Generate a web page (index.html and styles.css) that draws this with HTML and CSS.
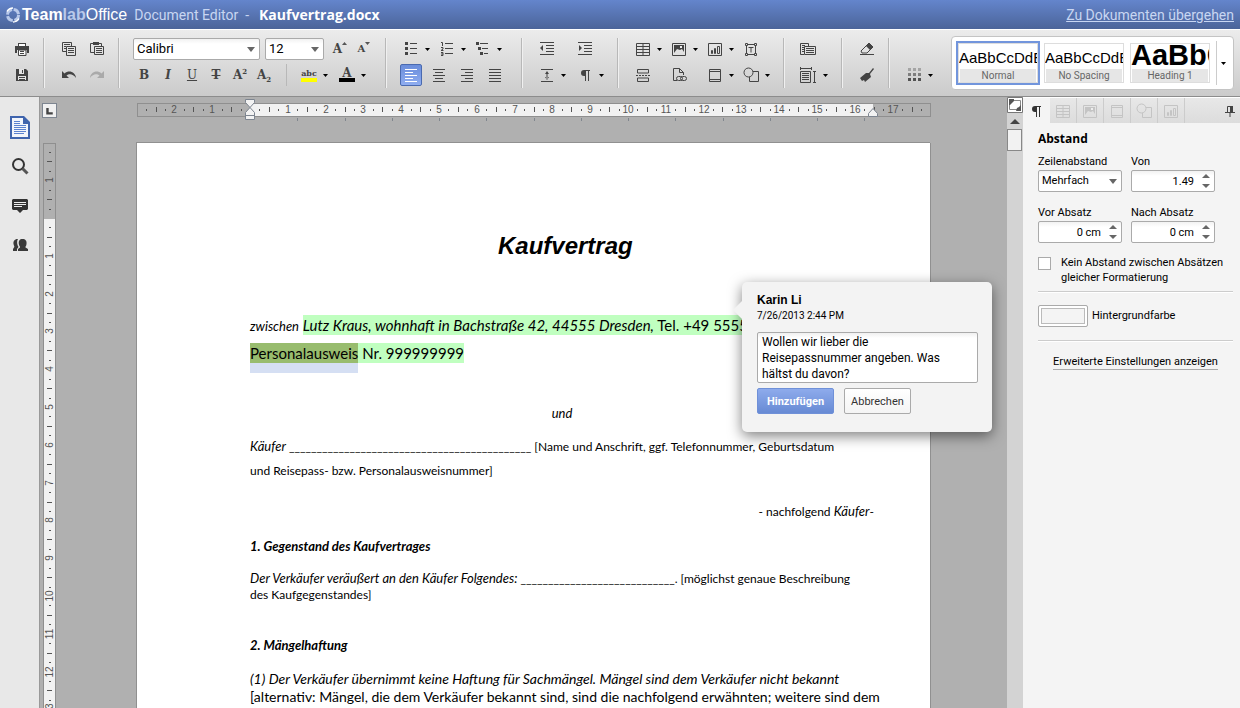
FILE: index.html
```html
<!DOCTYPE html>
<html lang="de">

<head>
  <meta charset="UTF-8">
  <meta name="viewport" content="width=device-width, initial-scale=1.0">
  <title>Kaufvertrag.docx</title>
  <link rel="stylesheet" href="styles.css">
</head>

<body>

  <!-- icon sprite -->
  <svg class="sprite">
    <symbol id="print" viewBox="0 0 16 16"><path fill="currentColor" d="M4 2h8v3H4zM1 5h14v7h-2V9H3v3H1z"/><path fill="#fff" d="M5 3h6v2H5zM4.500 9.500h7v4h-7z"/><path fill="none" stroke="currentColor" d="M4 9h8v5.500H4.500V9M6 10.500h4M6 12.500h4"/></symbol>
    <symbol id="save" viewBox="0 0 16 16"><path fill="currentColor" d="M2 2h10l2 2v10H2z"/><path fill="#e4e4e4" d="M5 2h5v5H5zM4 9h8v4H4z"/><path fill="currentColor" d="M8 3h1v3H8zM5 10h6v1H5zM5 12h6v1H5z"/></symbol>
    <symbol id="copy" viewBox="0 0 16 16"><path fill="none" stroke="currentColor" d="M5 10.500H1.500v-9h9V5M3 3.500h6M3 5.500h2M3 7.500h2M5.500 5.500h9v9h-9zM7 7.500h6M7 9.500h6M7 11.500h6"/></symbol>
    <symbol id="paste" viewBox="0 0 16 16"><path fill="none" stroke="currentColor" d="M5 11.500H1.500v-9h11V5M5.500 5.500h9v8h-9zM7 7.500h6M7 9.500h6M7 11.500h6"/><path fill="currentColor" d="M4 1h6v3H4z"/></symbol>
    <symbol id="undo" viewBox="0 0 16 16"><path fill="currentColor" d="M1 4v7h7L5.500 8.500C8 6.500 12 6.500 15 11c-.5-6-7-8.500-11.500-4.500z"/></symbol>
    <symbol id="redo" viewBox="0 0 16 16"><path fill="currentColor" d="M15 4v7H8l2.500-2.500C8 6.500 4 6.500 1 11c.5-6 7-8.500 11.500-4.500z"/></symbol>
    <symbol id="bullets" viewBox="0 0 16 16"><path fill="currentColor" d="M2 1h3v3H2zM2 6h3v3H2zM2 11h3v3H2zM7 2h7v1H7zM7 7h7v1H7zM7 12h7v1H7z"/></symbol>
    <symbol id="numbers" viewBox="0 0 16 16"><path fill="currentColor" d="M6 2h8v1H6zM6 7h8v1H6zM6 12h8v1H6z"/><path fill="none" stroke="currentColor" d="M2 1.500h1.500V5M2 6.500h2v1.500L2 9.500h2.500M2 11.500h2v3H2M2 13h2"/></symbol>
    <symbol id="levels" viewBox="0 0 16 16"><path fill="currentColor" d="M1 1h3v3H1zM3 6h3v3H3zM5 11h3v3H5zM5 2h8v1H5zM7 7h6v1H7zM9 12h4v1H9z"/></symbol>
    <symbol id="left" viewBox="0 0 16 16"><path fill="currentColor" d="M2 2h12v1H2zM2 5h8v1H2zM2 8h12v1H2zM2 11h8v1H2zM2 14h12v1H2z"/></symbol>
    <symbol id="center" viewBox="0 0 16 16"><path fill="currentColor" d="M2 2h12v1H2zM4 5h8v1H4zM2 8h12v1H2zM4 11h8v1H4zM2 14h12v1H2z"/></symbol>
    <symbol id="right" viewBox="0 0 16 16"><path fill="currentColor" d="M2 2h12v1H2zM6 5h8v1H6zM2 8h12v1H2zM6 11h8v1H6zM2 14h12v1H2z"/></symbol>
    <symbol id="justify" viewBox="0 0 16 16"><path fill="currentColor" d="M2 2h12v1H2zM2 5h12v1H2zM2 8h12v1H2zM2 11h12v1H2zM2 14h12v1H2z"/></symbol>
    <symbol id="outdent" viewBox="0 0 16 16"><path fill="currentColor" d="M1 1h14v1H1zM7 4h8v1H7zM7 7h8v1H7zM7 10h8v1H7zM1 13h14v1H1zM4 4v6L1 7z"/></symbol>
    <symbol id="indent" viewBox="0 0 16 16"><path fill="currentColor" d="M1 1h14v1H1zM7 4h8v1H7zM7 7h8v1H7zM7 10h8v1H7zM1 13h14v1H1zM2 4v6l3-3z"/></symbol>
    <symbol id="spacing" viewBox="0 0 16 16"><path fill="currentColor" d="M2 2h12v1H2zM2 14h12v1H2zM7.500 5h1v7h-1zM8 4l2 3H6zM8 13l2-3H6z"/></symbol>
    <symbol id="para" viewBox="0 0 16 16"><path fill="currentColor" d="M7 3h6v1h-1v10h-1V4H9v10H8V9H7a3 3 0 0 1 0-6z"/></symbol>
    <symbol id="table" viewBox="0 0 16 16"><path fill="none" stroke="currentColor" d="M1.500 2.500h13v12h-13zM1.500 5.500h13M1.500 8.500h13M1.500 11.500h13M8 2.500v12"/></symbol>
    <symbol id="image" viewBox="0 0 16 16"><path fill="none" stroke="currentColor" d="M1.500 2.500h13v12h-13z"/><path fill="currentColor" d="M3 4h10v7l-2-3-2 1-3-1-3 4z"/><path fill="#eee" d="M9 5h2v2H9z"/></symbol>
    <symbol id="chart" viewBox="0 0 16 16"><path fill="none" stroke="currentColor" d="M1.500 2.500h13v12h-13zM4.500 9.500h1v3h-1zM7.500 7.500h1v5h-1zM10.500 5.500h2v7h-2z"/></symbol>
    <symbol id="textbox" viewBox="0 0 16 16"><path fill="none" stroke="currentColor" d="M4 3.500h8M4 13.500h8M3.500 5v7M12.500 5v7M2.500 2.500h2v2h-2zM11.500 2.500h2v2h-2zM2.500 12.500h2v2h-2zM11.500 12.500h2v2h-2zM5.500 6.500h5M8 6.500v5"/></symbol>
    <symbol id="pagebreak" viewBox="0 0 16 16"><path fill="none" stroke="currentColor" d="M2.500 6V2.500h11V6zM2.500 14.500V11h11v3.500z"/><path fill="none" stroke="currentColor" stroke-dasharray="2 1" d="M1 8.500h14"/></symbol>
    <symbol id="link" viewBox="0 0 16 16"><path fill="none" stroke="currentColor" d="M6 13.500H2.500v-12h6l4 4V8M8.500 1.500v4h4"/><rect x="5.500" y="9.500" width="6" height="4" rx="2" fill="none" stroke="currentColor"/><rect x="9.500" y="9.500" width="6" height="4" rx="2" fill="none" stroke="currentColor"/></symbol>
    <symbol id="headfoot" viewBox="0 0 16 16"><path fill="none" stroke="currentColor" d="M2.500 2.500h11v12h-11zM2.500 4.500h11M2.500 12.500h11"/></symbol>
    <symbol id="shapes" viewBox="0 0 16 16"><path fill="none" stroke="currentColor" d="M10 4.500h5.500v10h-9V10"/><circle cx="5.500" cy="5.500" r="4.500" fill="none" stroke="currentColor"/></symbol>
    <symbol id="wrap" viewBox="0 0 18 16"><path fill="none" stroke="currentColor" d="M5 13.500H1.500v-11h8V5M3 4.500h3M3 6.500h2M3 8.500h2M3 10.500h2M5.500 5.500h11v8h-11zM7 7.500h8M7 9.500h8M7 11.500h8"/></symbol>
    <symbol id="size" viewBox="0 0 18 16"><path fill="none" stroke="currentColor" d="M1 1.500h12M1.500 0v3M12.500 0v3M1.500 4.500h10v11h-10zM3 6.500h7M3 8.500h7M3 10.500h7M3 12.500h7M14 4.500h3M14 15.500h3M15.500 4.500v11"/></symbol>
    <symbol id="eraser" viewBox="0 0 16 16"><path fill="none" stroke="currentColor" d="M1 13.500h14M2 10l8-8 4 4-6 6H3z"/><path fill="currentColor" d="M10 2l4 4-3 3-4-4z"/></symbol>
    <symbol id="brush" viewBox="0 0 16 16"><path fill="currentColor" d="M14 1l1 1-4 5 1 3-6 5-1-2-2 1-2-3 6-5 3 0z"/></symbol>
    <symbol id="tiles" viewBox="0 0 16 16"><path fill="currentColor" opacity=".35" d="M2 1h3v3H2zM7 1h3v3H7zM12 1h3v3h-3z"/><path fill="currentColor" opacity=".6" d="M2 6h3v3H2zM7 6h3v3H7zM12 6h3v3h-3z"/><path fill="currentColor" opacity=".9" d="M2 11h3v3H2zM7 11h3v3H7zM12 11h3v3h-3z"/></symbol>
    <symbol id="caret" viewBox="0 0 5 3"><path fill="#000" d="M0 0h5L2.500 3z"/></symbol>
    <symbol id="pin" viewBox="0 0 16 16"><path fill="none" stroke="currentColor" d="M5.500 9V3.500h5V9M3 9.500h10M8 10v4"/><path fill="currentColor" d="M8 3h3v6H8z"/></symbol>
  </svg>

  <header class="header">
    <svg class="logo" viewBox="0 0 16 16">
      <circle cx="8" cy="8" r="5.500" fill="none" stroke="#b9c9ea" stroke-width="3" stroke-dasharray="7 1.640"/>
      <path fill="none" stroke="#fff" stroke-width="1.500" d="M2 4.500A7 7 0 0 1 8 1M14 11.500A7 7 0 0 1 8 15"/>
    </svg>
    <span class="brand"><b>Team</b><b class="pale">lab</b>Office</span>
    <span class="product">Document Editor &nbsp;-</span>
    <h1 class="filename">Kaufvertrag.docx</h1>
    <a class="back" href="#documents">Zu Dokumenten übergehen</a>
  </header>

  <div class="toolbar">
    <div class="group">
      <div class="row"><button class="btn" aria-label="Drucken"><svg><use href="#print"/></svg></button></div>
      <div class="row"><button class="btn" aria-label="Speichern"><svg><use href="#save"/></svg></button></div>
    </div>

    <div class="group">
      <div class="row spaced">
        <button class="btn" aria-label="Kopieren"><svg><use href="#copy"/></svg></button>
        <button class="btn" aria-label="Einfügen"><svg><use href="#paste"/></svg></button>
      </div>
      <div class="row spaced">
        <button class="btn" aria-label="Rückgängig"><svg><use href="#undo"/></svg></button>
        <button class="btn" aria-label="Wiederholen" disabled><svg><use href="#redo"/></svg></button>
      </div>
    </div>

    <div class="group">
      <div class="row fonts">
        <span class="combo font-name"><select aria-label="Schriftart"><option>Calibri</option></select></span>
        <span class="combo font-size"><select aria-label="Schriftgrad"><option>12</option></select></span>
        <div class="row tight">
          <button class="btn letter" aria-label="Vergrößern">A<svg class="grow" viewBox="0 0 5 3"><path d="M0 3h5L2.500 0z"/></svg></button>
          <button class="btn letter small" aria-label="Verkleinern">A<svg class="grow" viewBox="0 0 5 3"><path d="M0 0h5L2.500 3z"/></svg></button>
        </div>
      </div>
      <div class="row tight">
        <button class="btn letter">B</button>
        <button class="btn letter italic">I</button>
        <button class="btn letter underline">U</button>
        <button class="btn letter strike">T</button>
        <button class="btn letter">A<sup>2</sup></button>
        <button class="btn letter">A<sub>2</sub></button>
        <i class="divider"></i>
        <button class="btn split"><span class="mark">abc</span><svg class="caret"><use href="#caret"/></svg></button>
        <button class="btn split"><span class="mark color">A</span><svg class="caret"><use href="#caret"/></svg></button>
      </div>
    </div>

    <div class="group lists">
      <div class="row">
        <button class="btn split" aria-label="Aufzählung"><svg><use href="#bullets"/></svg><svg class="caret"><use href="#caret"/></svg></button>
        <button class="btn split" aria-label="Nummerierung"><svg><use href="#numbers"/></svg><svg class="caret"><use href="#caret"/></svg></button>
        <button class="btn split" aria-label="Gliederung"><svg><use href="#levels"/></svg><svg class="caret"><use href="#caret"/></svg></button>
      </div>
      <div class="row spaced">
        <button class="btn active" aria-label="Linksbündig"><svg><use href="#left"/></svg></button>
        <button class="btn" aria-label="Zentriert"><svg><use href="#center"/></svg></button>
        <button class="btn" aria-label="Rechtsbündig"><svg><use href="#right"/></svg></button>
        <button class="btn" aria-label="Blocksatz"><svg><use href="#justify"/></svg></button>
      </div>
    </div>

    <div class="group indents">
      <div class="row tight">
        <button class="btn split" aria-label="Einzug verkleinern"><svg><use href="#outdent"/></svg></button>
        <button class="btn split" aria-label="Einzug vergrößern"><svg><use href="#indent"/></svg></button>
      </div>
      <div class="row tight">
        <button class="btn split" aria-label="Zeilenabstand"><svg><use href="#spacing"/></svg><svg class="caret"><use href="#caret"/></svg></button>
        <button class="btn split" aria-label="Steuerzeichen"><svg><use href="#para"/></svg><svg class="caret"><use href="#caret"/></svg></button>
      </div>
    </div>

    <div class="group inserts">
      <div class="row">
        <button class="btn split" aria-label="Tabelle"><svg><use href="#table"/></svg><svg class="caret"><use href="#caret"/></svg></button>
        <button class="btn split" aria-label="Bild"><svg><use href="#image"/></svg><svg class="caret"><use href="#caret"/></svg></button>
        <button class="btn split" aria-label="Diagramm"><svg><use href="#chart"/></svg><svg class="caret"><use href="#caret"/></svg></button>
        <button class="btn split" aria-label="Textfeld"><svg><use href="#textbox"/></svg></button>
      </div>
      <div class="row">
        <button class="btn split" aria-label="Umbruch"><svg><use href="#pagebreak"/></svg></button>
        <button class="btn split" aria-label="Hyperlink"><svg><use href="#link"/></svg></button>
        <button class="btn split" aria-label="Kopf- und Fußzeile"><svg><use href="#headfoot"/></svg><svg class="caret"><use href="#caret"/></svg></button>
        <button class="btn split" aria-label="Formen"><svg><use href="#shapes"/></svg><svg class="caret"><use href="#caret"/></svg></button>
      </div>
    </div>

    <div class="group inserts">
      <div class="row"><button class="btn split page-btn" aria-label="Ausrichtung"><svg class="wide"><use href="#wrap"/></svg></button></div>
      <div class="row"><button class="btn split page-btn" aria-label="Seitengröße"><svg class="wide"><use href="#size"/></svg><svg class="caret"><use href="#caret"/></svg></button></div>
    </div>

    <div class="group">
      <div class="row"><button class="btn" aria-label="Formatierung löschen"><svg><use href="#eraser"/></svg></button></div>
      <div class="row"><button class="btn" aria-label="Format übertragen"><svg><use href="#brush"/></svg></button></div>
    </div>

    <div class="group last">
      <div class="row"><button class="btn split" aria-label="Farbschema"><svg><use href="#tiles"/></svg><svg class="caret"><use href="#caret"/></svg></button></div>
    </div>

    <div class="gallery">
      <button class="style active"><span class="sample">AaBbCcDdEe</span><span class="name">Normal</span></button>
      <button class="style"><span class="sample">AaBbCcDdEe</span><span class="name">No Spacing</span></button>
      <button class="style"><span class="sample big">AaBbCc</span><span class="name">Heading 1</span></button>
      <button class="more" aria-label="Mehr"><svg class="caret"><use href="#caret"/></svg></button>
    </div>
  </div>

  <main class="main">
    <nav class="sidebar">
      <button aria-label="Datei"><svg viewBox="0 0 20 24"><path fill="#3f64ad" d="M0 1h14l6 6v17H0z"/><path fill="#f2f5fb" d="M2 3h11v6h5v13H2z"/><path fill="none" stroke="#5b82d0" d="M4 6.500h6M4 8.500h6M4 10.500h12M4 12.500h12M4 14.500h12M4 16.500h12M4 18.500h10"/></svg></button>
      <button aria-label="Suche"><svg viewBox="0 0 20 24"><circle cx="8.500" cy="10.500" r="5.500" fill="none" stroke="#333" stroke-width="2"/><path stroke="#555" stroke-width="3" d="M12.500 14.500l5 5"/></svg></button>
      <button aria-label="Kommentare"><svg viewBox="0 0 20 24"><path fill="#333" d="M3 6h14l1 1v9l-1 1h-4l-3 3-3-3H3l-1-1V7z"/><path stroke="#eee" d="M4 9.500h12M4 11.500h12M4 13.500h8"/></svg></button>
      <button aria-label="Chat"><svg viewBox="0 0 20 24"><path fill="#3a3a3a" d="M12.500 7c3 0 4.500 2 4 5 0 2-1.500 2.500-1 3.500L18 17v2H8v-2l2-1.500c.5-1-1-1.500-1.200-3.500-.4-3 .7-5 3.700-5zM8 7c-3-.5-5 2-4.500 5 .3 1.500 1 2 .8 3L3 17v2h4v-2l1.500-2C7 13 6.500 9 8 7z"/></svg></button>
    </nav>

    <section class="editor">
      <button class="tabstop" aria-label="Tabulator"><svg viewBox="0 0 16 16"><path stroke="#444" stroke-width="3" fill="none" d="M5.500 5v6.500H12"/></svg></button>
      <svg class="ruler-h" id="ruler-h"></svg>
      <svg class="ruler-v" id="ruler-v"></svg>

      <div class="canvas">
        <article class="page">
          <h2 class="title">&nbsp;Kaufvertrag</h2>
          <p class="party"><small>zwischen</small> <mark><em>Lutz Kraus, wohnhaft in Bachstraße 42, 44555 Dresden,</em> Tel. +49 55555555</mark><br><mark><span class="selected">Personalausweis</span> Nr. 999999999</mark></p>
          <p class="aside seller">- nachfolgend <em>Verkäufer</em>-</p>
          <p class="and"><em>und</em></p>
          <p class="buyer"><em>Käufer</em> ____________________________________________ [Name und Anschrift, ggf. Telefonnummer, Geburtsdatum<br>und Reisepass- bzw. Personalausweisnummer]</p>
          <p class="aside">- nachfolgend <em>Käufer</em>-</p>
          <h3>1. Gegenstand des Kaufvertrages</h3>
          <p class="subject"><em>Der Verkäufer veräußert an den Käufer Folgendes:</em> ____________________________. [möglichst genaue Beschreibung<br>des Kaufgegenstandes]</p>
          <h3 class="second">2. Mängelhaftung</h3>
          <p class="clause"><em>(1) Der Verkäufer übernimmt keine Haftung für Sachmängel. Mängel sind dem Verkäufer nicht bekannt</em><br>[alternativ: Mängel, die dem Verkäufer bekannt sind, sind die nachfolgend erwähnten; weitere sind dem</p>

          <form class="comment">
            <h4>Karin Li</h4>
            <time>7/26/2013 2:44 PM</time>
            <textarea id="comment-text" aria-label="Kommentar" spellcheck="false">Wollen wir lieber die
Reisepassnummer angeben. Was
hältst du davon?</textarea>
            <div class="actions">
              <button type="button" class="primary">Hinzufügen</button>
              <button type="button">Abbrechen</button>
            </div>
          </form>
        </article>
      </div>
    </section>

    <div class="scrollbar">
      <button aria-label="Ansicht"><svg viewBox="0 0 16 16"><path fill="#fff" stroke="#777" d="M.5.5h15v15H.5z"/><path fill="none" stroke="#888" d="M2.500 3.500h11v9h-11z"/><path fill="#555" d="M2 2h5v2L5 6 3 8H2zM14 14H9l1-3 2-1 2-2z"/></svg></button>
      <button aria-label="Nach oben"><svg viewBox="0 0 16 16"><path fill="#444" d="M3 11h10L8 6z"/></svg></button>
      <div class="thumb"></div>
    </div>

    <aside class="panel">
      <div class="tabs">
        <button class="active" aria-label="Absatz"><svg><use href="#para"/></svg></button>
        <button aria-label="Tabelle"><svg><use href="#table"/></svg></button>
        <button aria-label="Bild"><svg><use href="#image"/></svg></button>
        <button aria-label="Kopfzeile"><svg><use href="#headfoot"/></svg></button>
        <button aria-label="Form"><svg><use href="#shapes"/></svg></button>
        <button aria-label="Diagramm"><svg><use href="#chart"/></svg></button>
        <div class="pin"><svg><use href="#pin"/></svg></div>
      </div>

      <div class="settings">
        <h2>Abstand</h2>
        <div class="fields">
          <div class="field">
            <label for="spacing-type">Zeilenabstand</label>
            <span class="combo"><select id="spacing-type"><option>Mehrfach</option></select></span>
          </div>
          <div class="field">
            <label for="spacing-value">Von</label>
            <span class="spin"><input id="spacing-value" type="text" value="1.49"></span>
          </div>
          <div class="field">
            <label for="before">Vor Absatz</label>
            <span class="spin"><input id="before" type="text" value="0 cm"></span>
          </div>
          <div class="field">
            <label for="after">Nach Absatz</label>
            <span class="spin"><input id="after" type="text" value="0 cm"></span>
          </div>
        </div>

        <label class="check"><input type="checkbox"><span>Kein Abstand zwischen Absätzen gleicher Formatierung</span></label>
        <hr>
        <div class="background">
          <button id="bg-color" class="swatch" aria-label="Hintergrundfarbe"></button>
          <label for="bg-color">Hintergrundfarbe</label>
        </div>
        <hr>
        <a class="advanced" href="#advanced">Erweiterte Einstellungen anzeigen</a>
      </div>
    </aside>
  </main>

  <script>

    const CM = 37.8
    const $ = s => document.querySelector(s)

    // marks between two centimetres, numbers on the full ones
    const marks = (from, to, vertical) => {
      let out = ''
      for (let q = Math.ceil(from * 4); q <= to * 4; q++) {
        const pos = Math.round(q / 4 * CM)
        if (q === 0) continue
        if (q % 4 === 0) {
          const n = Math.abs(q / 4)
          out += vertical
            ? `<text transform="translate(10 ${pos}) rotate(-90)">${n}</text>`
            : `<text x="${pos}" y="10">${n}</text>`
        } else {
          const size = q % 2 === 0 ? 5 : 2
          out += vertical
            ? `<rect x="${Math.round(6.5 - size / 2)}" y="${pos}" width="${size}" height="1"/>`
            : `<rect x="${pos}" y="${Math.round(6.5 - size / 2)}" width="1" height="${size}"/>`
        }
      }
      return out
    }

    let tabs = ''
    for (let x = 47.25; x < 620; x += 47.25) tabs += `<rect class="tab" x="${Math.round(x)}" y="15" width="1" height="3"/>`

    $('#ruler-h').innerHTML = `
      <rect class="margin" x=".5" y=".5" width="793" height="13"/>
      <rect class="inner" x="113" y="1" width="623" height="12"/>
      <g transform="translate(113 0)">${marks(-2.8, 17.8, false)}${tabs}</g>
      <path class="marker" d="M108.500 -3.500h9v3l-4.500 5 4.500 5v7h-9v-7l4.500-5-4.500-5zM108.500 12.500h9"/>
      <path class="marker" d="M731.500 13.500v-3l4.500-5 4.500 5v3z"/>`

    $('#ruler-v').innerHTML = `
      <rect class="margin" x=".5" y=".5" width="12" height="1122"/>
      <rect class="inner" x="1" y="76" width="11" height="1000"/>
      <g transform="translate(0 75)">${marks(-1.8, 20, true)}</g>`

    const $text = $('#comment-text')
    $text.focus({ preventScroll: true })
    $text.setSelectionRange($text.value.length, $text.value.length)

  </script>

</body>

</html>
```
FILE: styles.css
```css
* {
  margin: 0;
  padding: 0;
  box-sizing: border-box;
}

body {
  height: 100vh;
  display: flex;
  flex-direction: column;
  overflow: hidden;
  font: 11px/16px Roboto, "Liberation Sans", sans-serif;
  color: #000;
  background: #b0b0b0;
}

button {
  border: 0;
  background: none;
  font: inherit;
  color: inherit;
}

svg {
  display: block;
}

.sprite {
  display: none;
}

/* header */

.header {
  height: 29px;
  flex: none;
  display: flex;
  align-items: center;
  padding: 0 6px 0 5px;
  font-size: 14px;
  color: #c8d6f2;
  background: linear-gradient(#6485cc, #4b6499);
}

.logo {
  width: 16px;
  height: 16px;
  margin-right: 1px;
}

.brand {
  font-family: "Liberation Sans", sans-serif;
  font-size: 16px;
  color: #fff;
}

.brand .pale {
  color: #b9c9ea;
}

.product {
  margin-left: 7px;
}

.filename {
  margin-left: 10px;
  font-family: "Open Sans", sans-serif;
  font-size: 14px;
  color: #fff;
}

.back {
  margin-left: auto;
  color: #c8d6f2;
}

/* toolbar */

.toolbar {
  height: 68px;
  flex: none;
  display: flex;
  align-items: flex-start;
  padding: 8px 8px 0 0;
  border-top: 1px solid #fff;
  border-bottom: 1px solid #8c8c8c;
  color: #444;
  background: linear-gradient(#ececec, #cbcbcb);
}

.group {
  height: 50px;
  display: flex;
  flex-direction: column;
  gap: 4px;
  padding: 0 11px;
  border-right: 1px solid #f0f0f0;
  box-shadow: inset -1px 0 #b8b8b8;
  margin-right: 1px;
}

.group + .group {
  padding-left: 12px;
}

.group.lists {
  padding-right: 14px;
}

.group.indents {
  padding-right: 8px;
}

.group.inserts {
  padding-right: 8px;
}

.group.last {
  border: 0;
  box-shadow: none;
  padding-top: 26px;
}

.row {
  display: flex;
  height: 22px;
}

.row.spaced {
  gap: 6px;
}

.row.tight {
  gap: 2px;
}

.row.fonts {
  gap: 5px;
}

.btn {
  width: 22px;
  height: 22px;
  display: flex;
  align-items: center;
  padding: 0 3px;
  border-radius: 2px;
}

.btn svg {
  width: 16px;
  height: 16px;
  flex: none;
}

.btn svg.wide {
  width: 18px;
}

.btn:disabled {
  color: #aaa;
}

.btn.active {
  color: #fff;
  padding: 0 2px;
  border: 1px solid #4a6ab0;
  background: linear-gradient(#6a8ddb, #8fadf0);
}

.btn.split {
  width: 36px;
  gap: 6px;
}

.btn.page-btn {
  padding: 0 1px;
}

.btn svg.caret,
.more .caret {
  width: 5px;
  height: 3px;
}

.letter {
  position: relative;
  justify-content: center;
  padding: 0;
  font: bold 12px/22px "DejaVu Serif", serif;
}

.letter.small {
  font-size: 10px;
}

.letter.italic {
  font-style: italic;
}

.letter.underline {
  font-weight: normal;
  text-decoration: underline;
}

.letter.strike {
  text-decoration: line-through;
}

.letter sup,
.letter sub {
  font-size: 7px;
  line-height: 8px;
}

.letter sup {
  align-self: flex-start;
  margin-top: 4px;
}

.letter sub {
  align-self: flex-end;
  margin-bottom: 2px;
}

.btn svg.grow {
  width: 5px;
  height: 3px;
  align-self: flex-start;
  margin-top: 4px;
  fill: #555;
}

.divider {
  width: 1px;
  margin: 0 9px;
  background: #b8b8b8;
}

.btn.split .mark {
  width: 16px;
  font: bold 8px/10px "DejaVu Serif", serif;
  border-bottom: 4px solid #ff0;
}

.btn.split .mark.color {
  font-size: 12px;
  border-color: #000;
}

.combo {
  position: relative;
  display: block;
}

.combo select {
  width: 100%;
  height: 22px;
  padding: 0 3px;
  appearance: none;
  border: 1px solid #aaa;
  border-radius: 2px;
  font: inherit;
  color: #000;
  background: linear-gradient(#f2f2f2, #fff 5px);
}

.combo::after {
  content: '';
  position: absolute;
  right: 5px;
  top: 9px;
  border: 4px solid transparent;
  border-top: 5px solid #666;
  border-bottom: 0;
}

.font-name {
  width: 127px;
  font-size: 13px;
}

.font-size {
  width: 59px;
  font-size: 13px;
}

.gallery {
  height: 54px;
  display: flex;
  gap: 2px;
  margin: -2px 0 0 auto;
  padding: 4px;
  border: 1px solid #c4c4c4;
  border-radius: 4px;
  background: #fff;
}

.style {
  width: 84px;
  height: 44px;
  display: flex;
  flex-direction: column;
  justify-content: space-between;
  overflow: hidden;
  padding: 1px;
  border: 2px solid transparent;
  box-shadow: inset 0 0 0 1px #ddd;
}

.style.active {
  border-color: #7295dc;
}

.sample {
  width: 100%;
  height: 26px;
  overflow: hidden;
  text-align: left;
  font: 15px/28px "Liberation Sans", sans-serif;
  color: #000;
}

.sample.big {
  font-weight: bold;
  font-size: 29px;
  line-height: 22px;
}

.name {
  width: 76px;
  height: 13px;
  margin: 0 1px;
  font-size: 10px;
  line-height: 13px;
  color: #666;
  background: #e6e6e6;
}

.more {
  margin-left: 2px;
  padding: 0 3px 0 4px;
  border-left: 1px solid #ccc;
}

/* main area */

.main {
  flex: 1;
  min-height: 0;
  display: flex;
}

.sidebar {
  width: 40px;
  flex: none;
  display: flex;
  flex-direction: column;
  align-items: center;
  gap: 15px;
  padding-top: 18px;
  border-right: 1px solid #999;
  background: #e8e8e8;
}

.sidebar svg {
  width: 20px;
  height: 24px;
}

.editor {
  flex: 1;
  min-width: 0;
  display: grid;
  grid-template: 46px 1fr / 21px 1fr;
  overflow: hidden;
}

.tabstop {
  width: 15px;
  height: 15px;
  margin: 6px 0 0 2px;
  border: 1px solid #7d8590;
  background: #f0f0f0;
}

.tabstop svg {
  width: 13px;
  height: 13px;
}

.ruler-h {
  width: 794px;
  height: 20px;
  margin: 6px auto 0;
  overflow: visible;
}

.ruler-v {
  width: 14px;
  height: 1123px;
  margin-left: 3px;
}

.ruler-h,
.ruler-v {
  fill: #555;
  font: 10px "Liberation Sans", sans-serif;
  text-anchor: middle;
}

.margin {
  fill: #b0b0b0;
  stroke: #8f8f8f;
}

.inner {
  fill: #f2f2f2;
}

.tab {
  fill: #80868e;
}

.marker {
  fill: #f2f2f2;
  stroke: #7d8590;
}

.canvas {
  grid-column: 2;
}

/* document */

.page {
  position: relative;
  width: 794px;
  min-height: 1123px;
  margin: 0 auto;
  padding: 87px 57px 0 113px;
  box-shadow: inset -1px 0 #909090, -1px -1px #909090;
  background: #fff;
  font: 12px/24px Lato, sans-serif;
  white-space: nowrap;
}

.page em {
  line-height: 1;
}

.title {
  font: italic bold 24px/32px "Liberation Sans", sans-serif;
  text-align: center;
}

.party {
  margin-top: 49px;
  font-size: 15px;
  line-height: 28px;
}

.party small {
  font-size: 13px;
  font-style: italic;
  line-height: 1;
}

.party mark {
  padding: 1px 0;
  color: inherit;
  background: #c0ffc0;
}

.selected {
  padding: 1px 0;
  background: #98bc6e;
  box-shadow: 0 10px #d5dff3;
}

.aside {
  margin-top: 17px;
  text-align: right;
}

.aside.seller {
  margin-top: 1px;
}

.and {
  margin-top: 10px;
  text-align: center;
}

.buyer {
  margin-top: 9px;
}

.aside em,
.and em,
.buyer em,
.subject em {
  font-size: 13px;
}

.page h3 {
  margin-top: 10px;
  font-size: 13px;
  font-style: italic;
}

.subject {
  margin-top: 13px;
  line-height: 16px;
}

.page h3.second {
  margin-top: 30px;
}

.clause {
  margin-top: 13px;
  font-size: 14px;
  line-height: 18px;
}

/* comment popup */

.comment {
  position: absolute;
  left: 605px;
  top: 139px;
  width: 250px;
  height: 150px;
  padding: 11px 14px 0 15px;
  border-radius: 5px;
  font: 11px/15px Roboto, sans-serif;
  background: #f3f3f3;
  box-shadow: 0 4px 14px rgba(0, 0, 0, .5);
}

.comment::before {
  content: '';
  position: absolute;
  left: -9px;
  top: 19px;
  border: 9px solid transparent;
  border-left: 0;
  border-right-color: #f3f3f3;
}

.comment h4 {
  font: bold 12px/15px "Liberation Sans", sans-serif;
}

.comment time {
  display: block;
  font-size: 10px;
}

.comment textarea {
  display: block;
  width: 100%;
  height: 51px;
  margin-top: 9px;
  padding: 1px 4px;
  border: 1px solid #aaa;
  border-radius: 2px;
  outline: none;
  resize: none;
  overflow: hidden;
  font: 12px/16px Roboto, sans-serif;
  background: linear-gradient(#f0f0f0, #fff 5px);
}

.actions {
  display: flex;
  gap: 10px;
  margin-top: 5px;
}

.actions button {
  height: 26px;
  padding: 0 6px;
  border: 1px solid #aaa;
  border-radius: 2px;
  color: #333;
  background: linear-gradient(#fff, #f4f4f4);
}

.actions .primary {
  padding: 0 9px;
  border-color: #6f90d8;
  font-weight: bold;
  color: #fff;
  background: linear-gradient(#8eabec, #678ad4);
}

/* scrollbar */

.scrollbar {
  width: 16px;
  flex: none;
  background: #d3d3d3;
}

.scrollbar button,
.scrollbar svg {
  display: block;
  width: 16px;
  height: 16px;
}

.thumb {
  width: 15px;
  height: 22px;
  border: 1px solid #888;
  background: #f2f2f2;
}

/* right panel */

.panel {
  width: 217px;
  flex: none;
  background: #f4f4f4;
}

.tabs {
  height: 26px;
  display: flex;
  border-top: 1px solid #fff;
  background: linear-gradient(#e8e8e8, #dcdcdc);
}

.tabs button {
  width: 27px;
  padding: 0 5px;
  border-right: 1px solid #ccc;
  color: #c4c4c4;
}

.tabs svg {
  width: 16px;
  height: 16px;
}

.tabs .active {
  border: 0;
  color: #333;
  background: #f4f4f4;
}

.pin {
  margin: 5px 2px 0 auto;
  color: #444;
}

.settings {
  padding: 8px 7px 0 15px;
}

.settings h2 {
  font: bold 12px/16px "Open Sans", sans-serif;
}

.fields {
  display: grid;
  grid-template-columns: 84px 84px;
  gap: 13px 9px;
  margin-top: 7px;
}

.field label {
  display: block;
  line-height: 16px;
}

.spin {
  position: relative;
  display: block;
}

.spin input {
  width: 100%;
  height: 22px;
  padding: 0 20px 0 4px;
  border: 1px solid #aaa;
  border-radius: 2px;
  font: inherit;
  text-align: right;
  background: linear-gradient(#f2f2f2, #fff 5px);
}

.spin::before,
.spin::after {
  content: '';
  position: absolute;
  right: 5px;
  border: 4px solid transparent;
}

.spin::before {
  top: 4px;
  border-top: 0;
  border-bottom: 4px solid #666;
}

.spin::after {
  bottom: 4px;
  border-bottom: 0;
  border-top: 4px solid #666;
}

.check {
  display: flex;
  gap: 10px;
  margin-top: 12px;
  line-height: 15px;
}

.check input {
  width: 13px;
  height: 13px;
  flex: none;
  margin-top: 2px;
  appearance: none;
  border: 1px solid #aaa;
  background: #fff;
}

.settings hr {
  margin-top: 6px;
  border: 0;
  border-top: 1px solid #ccc;
  border-bottom: 1px solid #fff;
}

.background {
  display: flex;
  align-items: center;
  gap: 4px;
  margin: 12px 0 13px;
}

.swatch {
  width: 50px;
  height: 22px;
  border: 1px solid #aaa;
  border-radius: 2px;
  box-shadow: inset 0 0 0 2px #fff, inset 0 0 0 3px #bbb;
}

.advanced {
  display: block;
  width: max-content;
  margin: 13px auto 0;
  line-height: 14px;
  color: #000;
  text-decoration: none;
  border-bottom: 1px solid #aaa;
}
```
